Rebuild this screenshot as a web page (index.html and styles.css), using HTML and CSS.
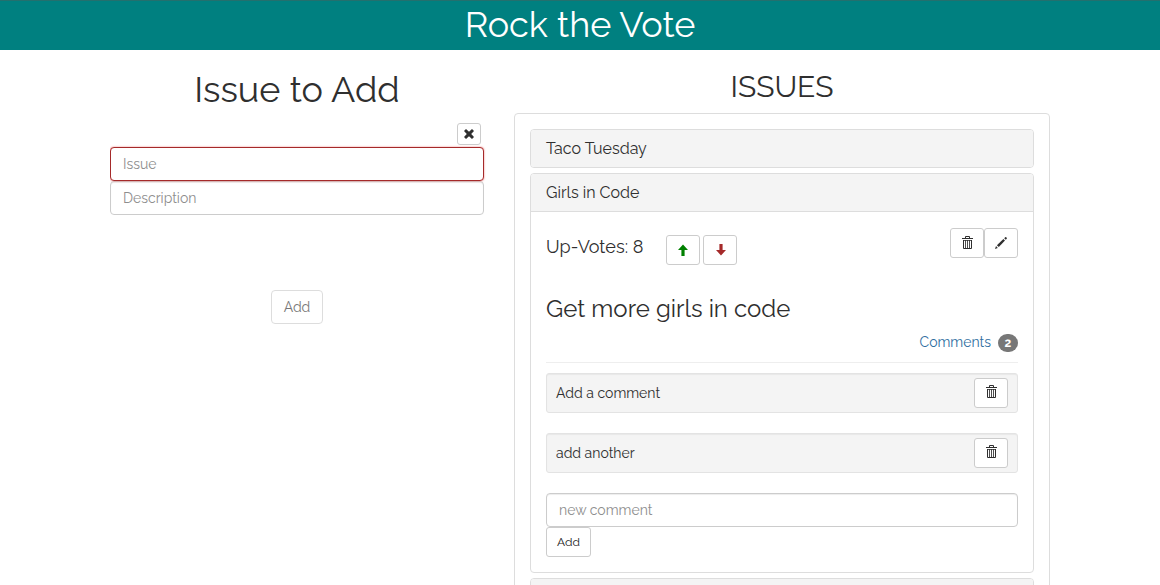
FILE: index.html
```
<!DOCTYPE html>
<html lang="en">
<head>
<meta charset="utf-8">
<title>Rock the Vote</title>
<link rel="stylesheet" href="styles.css">
</head>
<body>
<svg class="sprite" aria-hidden="true">
  <symbol id="trash" viewBox="0 0 11 13"><path d="M3.5 2V.5h4V2M0 2.5h11" fill="none" stroke="currentColor"/><path d="M1.5 4v8.5h8V4" fill="none" stroke="currentColor"/><path d="M1.5 4.5h8" stroke="currentColor" stroke-width=".8"/><path d="M3.5 4v8M5.5 4v8M7.5 4v8" stroke="currentColor" stroke-width=".85"/></symbol>
  <symbol id="pencil" viewBox="0 0 14 14"><path d="M1 13l1-3L3.8 12z"/><path d="M2.9 9.2L9.4 3l1.6 1.6L4.8 11.1z"/><path d="M10.2 2.2l1-.9q.5-.4 1 0l.5.5q.5.5 0 1l-.9 1z"/></symbol>
  <symbol id="up" viewBox="0 0 12 12"><path d="M6 .4L11 6H7.6v6H4.4V6H1z"/></symbol>
  <symbol id="down" viewBox="0 0 12 12"><path d="M6 11.6L11 6H7.6V0H4.4v6H1z"/></symbol>
  <symbol id="remove" viewBox="0 0 12 12"><path d="M3 1l3 2.8L9 1l2 2-2.8 3L11 9l-2 2-3-2.8L3 11 1 9l2.8-3L1 3z"/></symbol>
</svg>
<header class="banner"><h1 class="banner-title">Rock the Vote</h1></header>
<main class="container">
  <section class="add-issue">
    <h1 class="form-title">Issue to Add</h1>
    <div class="close-row"><button class="btn btn-xs"><svg class="icon-x"><use href="#remove"/></svg></button></div>
    <input class="field field-invalid" placeholder="Issue">
    <input class="field" placeholder="Description">
    <button class="btn submit">Add</button>
  </section>
  <section class="issues">
    <h2 class="issues-title">ISSUES</h2>
    <div class="issue-list">
      <article class="panel"><h4 class="panel-heading">Taco Tuesday</h4></article>
      <article class="panel">
        <h4 class="panel-heading open">Girls in Code</h4>
        <div class="panel-body">
          <div class="vote-row">
            <span class="votes">Up-Votes: 8</span>
            <div class="vote-buttons">
              <button class="btn btn-sm up"><svg class="arrow"><use href="#up"/></svg></button>
              <button class="btn btn-sm down"><svg class="arrow"><use href="#down"/></svg></button>
            </div>
            <div class="tools">
              <button class="btn btn-sm"><svg class="trash"><use href="#trash"/></svg></button>
              <button class="btn btn-sm"><svg class="pencil"><use href="#pencil"/></svg></button>
            </div>
          </div>
          <h3 class="description">Get more girls in code</h3>
          <div class="comments-row"><a class="comments-link">Comments</a><span class="badge">2</span></div>
          <div class="well"><span>Add a comment</span><button class="btn btn-sm"><svg class="trash trash-raised"><use href="#trash"/></svg></button></div>
          <div class="well"><span>add another</span><button class="btn btn-sm"><svg class="trash trash-raised"><use href="#trash"/></svg></button></div>
          <input class="field" placeholder="new comment">
          <button class="btn btn-sm add-comment">Add</button>
        </div>
      </article>
      <article class="panel"><h4 class="panel-heading">&nbsp;</h4></article>
    </div>
  </section>
</main>
</body>
</html>
```
FILE: styles.css
```
* { box-sizing: border-box; }
body { margin: 0; height: 585px; overflow: hidden; background: #fff; color: #2f2f2f; font: 14px/20px Raleway, Lato, "Open Sans", sans-serif; }
h1, h2, h3, h4 { margin: 0; font-weight: 400; }
svg { display: block; fill: currentColor; }
.sprite { position: absolute; width: 0; height: 0; }
.banner { height: 50px; background: #008080; border-top: 1px solid #24706e; color: #fff; text-align: center; }
.banner-title { font-size: 36px; line-height: 47px; }
.container { width: 940px; height: 535px; overflow: hidden; margin: 0 auto; display: flex; gap: 30px; }
.add-issue { width: 374px; display: flex; flex-direction: column; }
.form-title { margin-top: 19px; font-size: 36px; line-height: 40px; text-align: center; letter-spacing: .05px; }
.close-row { display: flex; justify-content: flex-end; padding: 14px 3px 2px 0; }
.btn { display: flex; align-items: center; justify-content: center; padding: 0; border: 1px solid #ccc; border-radius: 4px; background: #fff; color: #2f2f2f; font: inherit; }
.btn-xs { width: 24px; height: 22px; border-radius: 3px; }
.btn-sm { width: 34px; height: 30px; border-radius: 3px; font-size: 12px; }
.icon-x { width: 12px; height: 12px; }
.arrow { width: 12px; height: 12px; }
.down .arrow { margin-left: 1px; }
.trash { width: 11px; height: 13px; margin: 0 0 1px 1px; }
.trash-raised { margin-bottom: 3px; }
.pencil { width: 14px; height: 14px; }
.field { display: block; width: 100%; height: 34px; padding: 6px 12px; border: 1px solid #ccc; border-radius: 4px; background: #fff; font: inherit; box-shadow: inset 0 1px 1px rgba(0, 0, 0, .075); }
.field::placeholder { color: #8e8e8e; opacity: 1; }
.field-invalid { border-color: #a52a2a; box-shadow: 0 0 2px #e77; position: relative; }
.submit { width: 52px; height: 34px; margin: 75px auto 0; opacity: .65; }
.issues { width: 536px; }
.issues-title { margin-top: 20px; font-size: 30px; line-height: 33px; text-align: center; }
.issue-list { margin-top: 10px; border: 1px solid #ddd; border-radius: 4px; padding: 15px; display: flex; flex-direction: column; gap: 5px; }
.panel { border: 1px solid #ddd; border-radius: 4px; background: #fff; overflow: hidden; }
.panel-heading { padding: 10px 15px; height: 37px; background: #f4f4f4; font-size: 16px; line-height: 17px; }
.open { height: 38px; border-bottom: 1px solid #ddd; }
.panel-body { padding: 16px 15px 15px; }
.vote-row { display: flex; align-items: flex-start; }
.votes { width: 120px; font-size: 18px; line-height: 20px; padding-top: 9px; letter-spacing: .05px; }
.vote-buttons { display: flex; gap: 3px; padding-top: 7px; }
.up { color: green; }
.down { color: #a52a2a; }
.tools { display: flex; margin-left: auto; }
.description { margin-top: 31px; font-size: 24px; line-height: 26px; }
.comments-row { display: flex; justify-content: flex-end; align-items: center; gap: 7px; height: 41px; margin-bottom: 10px; border-bottom: 1px solid #eee; }
.comments-link { color: #306e9f; }
.badge { width: 20px; height: 18px; margin-top: 1px; border-radius: 10px; background: #777; color: #fff; font-size: 12px; font-weight: 700; line-height: 18px; text-align: center; }
.well { display: flex; align-items: center; justify-content: space-between; height: 40px; margin-bottom: 20px; padding: 0 9px; border: 1px solid #e3e3e3; border-radius: 3px; background: #f4f4f4; box-shadow: inset 0 1px 1px rgba(0, 0, 0, .05); }
.add-comment { width: 45px; color: #222; }
```
